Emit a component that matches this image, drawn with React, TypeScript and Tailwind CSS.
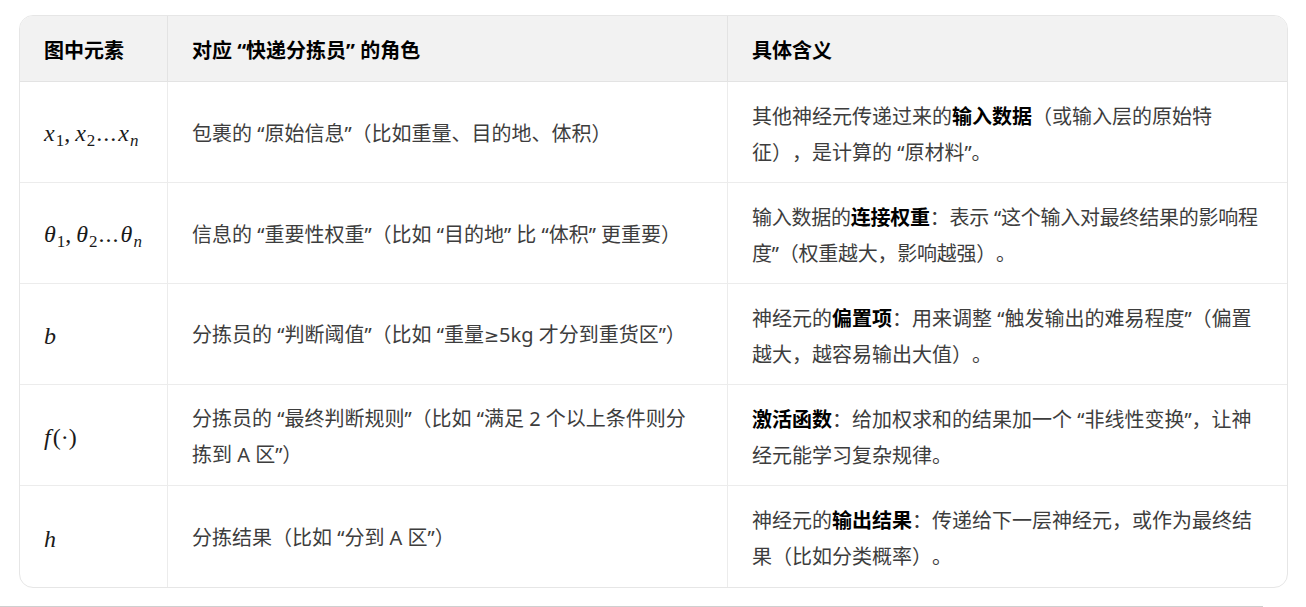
import React from 'react';

const M: React.FC<{ children: React.ReactNode }> = ({ children }) => (
    <span className="font-['Liberation_Serif',serif] text-[24px] text-[#1a1a1a] whitespace-nowrap">{children}</span>
);
const I: React.FC<{ children: React.ReactNode }> = ({ children }) => <span className="italic">{children}</span>;
const S: React.FC<{ children: React.ReactNode }> = ({ children }) => (
    <span className="text-[17px] relative top-[5px] ml-[1px]">{children}</span>
);
const Comma = () => <span className="mr-[5px]">,</span>;
const Dots = () => <span className="mx-[1px] tracking-[1px]">...</span>;

interface Row {
    sym: React.ReactNode;
    role: React.ReactNode;
    meaning: React.ReactNode;
    tight?: boolean;
}

const rows: Row[] = [
    {
        sym: (
            <M>
                <I>x</I><S>1</S><Comma /><I>x</I><S>2</S><Dots /><I>x</I><S><I>n</I></S>
            </M>
        ),
        role: '包裹的 “原始信息”（比如重量、目的地、体积）',
        meaning: (
            <>
                其他神经元传递过来的<b className="font-bold text-black">输入数据</b>（或输入层的原始特征），是计算的 “原材料”。
            </>
        ),
    },
    {
        sym: (
            <M>
                <I>θ</I><S>1</S><Comma /><I>θ</I><S>2</S><Dots /><I>θ</I><S><I>n</I></S>
            </M>
        ),
        role: '信息的 “重要性权重”（比如 “目的地” 比 “体积” 更重要）',
        meaning: (
            <>
                输入数据的<b className="font-bold text-black">连接权重</b>：表示 “这个输入对最终结果的影响程度”（权重越大，影响越强）。
            </>
        ),
        tight: true,
    },
    {
        sym: <M><I>b</I></M>,
        role: (
            <>
                分拣员的 “判断阈值”（比如 “重量<span className="font-['DejaVu_Sans',sans-serif] text-[18px]">≥</span>5kg 才分到重货区”）
            </>
        ),
        meaning: (
            <>
                神经元的<b className="font-bold text-black">偏置项</b>：用来调整 “触发输出的难易程度”（偏置越大，越容易输出大值）。
            </>
        ),
    },
    {
        sym: <M><I>f</I><span className="ml-[2px]">(·)</span></M>,
        role: '分拣员的 “最终判断规则”（比如 “满足 2 个以上条件则分拣到 A 区”）',
        meaning: (
            <>
                <b className="font-bold text-black">激活函数</b>：给加权求和的结果加一个 “非线性变换”，让神经元能学习复杂规律。
            </>
        ),
    },
    {
        sym: <M><I>h</I></M>,
        role: '分拣结果（比如 “分到 A 区”）',
        meaning: (
            <>
                神经元的<b className="font-bold text-black">输出结果</b>：传递给下一层神经元，或作为最终结果（比如分类概率）。
            </>
        ),
    },
];

export default function App() {
    return (
        <div className="bg-white w-[1306px] h-[607px] overflow-hidden font-['Noto_Sans','Noto_Sans_CJK_SC',sans-serif] text-[20px] text-[#3d3d3d] [text-spacing-trim:space-all]">
            <div className="pt-[15px] pl-[19px] pr-[18px]">
                <div className="rounded-[14px] border border-[#e6e6e6] overflow-hidden">
                    <div className="grid grid-cols-[148px_560px_1fr] bg-[#f2f2f2] h-[66px] border-b border-[#e3e3e3] font-bold text-black">
                        <div className="px-6 pt-[5px] flex items-center border-r border-[#e3e3e3]">图中元素</div>
                        <div className="px-6 pt-[5px] flex items-center border-r border-[#e3e3e3]">对应 “快递分拣员” 的角色</div>
                        <div className="px-6 pt-[5px] flex items-center">具体含义</div>
                    </div>
                    {rows.map((r, i) => (
                        <div
                            key={i}
                            className={`grid grid-cols-[148px_560px_1fr] h-[101px] leading-[36px] ${i < rows.length - 1 ? 'border-b border-[#ececec]' : ''}`}
                        >
                            <div className="px-6 pt-[4px] flex items-center border-r border-[#ececec]">{r.sym}</div>
                            <div className="px-6 pt-[3px] flex items-center border-r border-[#ececec]">
                                <div>{r.role}</div>
                            </div>
                            <div className="px-6 pt-[5px] flex items-center">
                                <div className={r.tight ? 'tracking-[-0.25px]' : ''}>{r.meaning}</div>
                            </div>
                        </div>
                    ))}
                </div>
            </div>
            <div className="mt-[18px] h-[2px] w-[1263px] bg-[#cfcfcf]" />
        </div>
    );
}
